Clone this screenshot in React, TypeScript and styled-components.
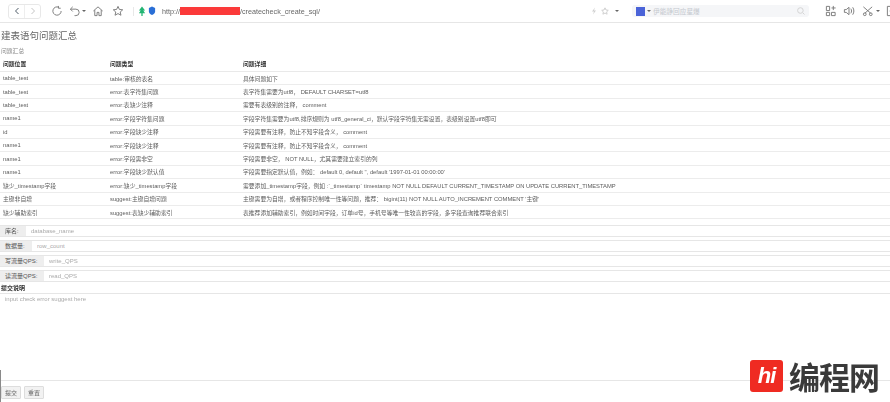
import styled, { createGlobalStyle } from "styled-components";

const Global = createGlobalStyle`
    html, body {
        margin: 0;
        padding: 0;
        background: #fff;
        overflow: hidden;
    }
`;

const FONT = `"Liberation Sans", "Noto Sans CJK SC", sans-serif`;

const Page = styled.div`
    position: relative;
    width: 890px;
    height: 402px;
    overflow: hidden;
    font-family: ${FONT};
    color: #555;
    filter: blur(0.35px);
`;

const Toolbar = styled.header`
    height: 23px;
    box-sizing: border-box;
    border-bottom: 1px solid #e6e6e6;
    display: flex;
    align-items: center;
    padding-left: 8px;
    color: #777;
`;

const NavGroup = styled.div`
    width: 33px;
    height: 15px;
    box-sizing: border-box;
    border: 1px solid #e8e8e8;
    border-radius: 3px;
    display: flex;
    flex: none;
    margin-right: 10px;
`;

const NavButton = styled.div<{ $off?: boolean }>`
    flex: 1;
    display: flex;
    align-items: center;
    justify-content: center;
    color: ${(p) => (p.$off ? "#c4c4c4" : "#4d5a66")};
    & + & {
        border-left: 1px solid #eee;
    }
`;

const ToolIcon = styled.svg<{ $gap?: number }>`
    width: 12px;
    height: 12px;
    fill: none;
    stroke: currentColor;
    stroke-width: 1;
    flex: none;
    margin-right: ${(p) => p.$gap ?? 6}px;
`;

const BadgeIcon = styled.svg<{ $color: string; $gap: number }>`
    width: 8px;
    height: 12px;
    flex: none;
    fill: ${(p) => p.$color};
    margin-right: ${(p) => p.$gap}px;
`;

const Caret = styled.span<{ $left?: number; $right?: number }>`
    width: 0;
    height: 0;
    border-left: 2px solid transparent;
    border-right: 2px solid transparent;
    border-top: 2px solid #666;
    flex: none;
    margin: 0 ${(p) => p.$right ?? 0}px 0 ${(p) => p.$left ?? 0}px;
`;

const Divider = styled.span`
    width: 1px;
    height: 9px;
    background: #e8e8e8;
    margin-right: 4px;
    flex: none;
`;

const Url = styled.div`
    font-size: 7.2px;
    color: #666;
    margin-left: 6px;
    width: 428px;
    flex: none;
    white-space: nowrap;
    display: flex;
    align-items: center;
`;

const Redaction = styled.span`
    display: inline-block;
    width: 60px;
    height: 8px;
    background: #fb3a3a;
`;

const PageActions = styled.div`
    width: 42px;
    flex: none;
    display: flex;
    align-items: center;
    gap: 3px;
    color: #cfcfcf;
`;

const SmallIcon = styled.svg`
    width: 8px;
    height: 8px;
    fill: none;
    stroke: currentColor;
    stroke-width: 1;
    flex: none;
`;

const SearchBox = styled.div`
    width: 177px;
    height: 12px;
    background: #f5f6f8;
    border-radius: 3px;
    display: flex;
    align-items: center;
    padding-left: 4px;
    box-sizing: border-box;
    flex: none;
    color: #c4c8ce;
    font-size: 6.7px;
    margin-right: 16px;
`;

const SearchLogo = styled.span`
    width: 9px;
    height: 9px;
    background: #4a63d8;
    flex: none;
    margin-right: 2px;
`;

const SearchText = styled.span`
    flex: 1;
    margin-left: 2px;
`;

const SearchGlass = styled(SmallIcon)`
    margin-right: 4px;
    color: #d4d4d4;
`;

const Main = styled.main`
    padding-top: 6px;
`;

const Title = styled.h3`
    margin: 0;
    font-size: 9.5px;
    line-height: 13px;
    font-weight: 400;
    color: #666;
    padding-left: 1px;
`;

const SubTitle = styled.div`
    font-size: 5.8px;
    line-height: 8px;
    color: #888;
    margin-top: 5px;
    padding-left: 1px;
`;

const Table = styled.table`
    width: 890px;
    border-collapse: collapse;
    table-layout: fixed;
    margin-top: 2px;
    font-size: 5.8px;
`;

const HeadCell = styled.th<{ $w: number }>`
    width: ${(p) => p.$w}px;
    height: 13px;
    padding: 0 0 1px 3px;
    text-align: left;
    font-weight: 700;
    color: #333;
    border-bottom: 1px solid #e9e9e9;
`;

const Cell = styled.td`
    height: 12.4px;
    padding: 0 0 0 3px;
    color: #5c5c5c;
    border-bottom: 1px solid #ececec;
    white-space: nowrap;
`;

const Form = styled.form`
    margin-top: 6px;
`;

const InputGroup = styled.div`
    height: 12px;
    display: flex;
    margin-bottom: 3px;
    border-top: 1px solid #e6e6e6;
    border-bottom: 1px solid #e6e6e6;
    box-sizing: border-box;
`;

const Addon = styled.span<{ $w: number }>`
    width: ${(p) => p.$w}px;
    flex: none;
    box-sizing: border-box;
    padding-left: 5px;
    background: #eee;
    color: #555;
    font-size: 6px;
    line-height: 10px;
`;

const Field = styled.input`
    flex: 1;
    border: 0;
    outline: 0;
    padding: 0 0 0 5px;
    min-width: 0;
    font: 6px ${FONT};
    background: #fff;
    &::placeholder {
        color: #aaa;
    }
`;

const NoteLabel = styled.label`
    display: block;
    font-size: 6px;
    line-height: 7px;
    font-weight: 700;
    color: #333;
    margin-left: 1px;
`;

const Note = styled.textarea`
    display: block;
    width: 890px;
    height: 88px;
    box-sizing: border-box;
    border: 0;
    border-top: 1px solid #e6e6e6;
    border-bottom: 1px solid #e6e6e6;
    outline: 0;
    resize: none;
    padding: 2px 5px;
    margin-top: 1px;
    font: 6px ${FONT};
    &::placeholder {
        color: #aaa;
    }
`;

const Buttons = styled.div`
    display: flex;
    gap: 3px;
    padding: 5px 0 0 1px;
`;

const Button = styled.button`
    width: 20px;
    height: 13px;
    padding: 0;
    border: 1px solid #ddd;
    border-radius: 1px;
    background: #f2f2f2;
    color: #666;
    font: 6px ${FONT};
`;

const EdgeLine = styled.div`
    position: absolute;
    left: 0;
    top: 370px;
    bottom: 0;
    width: 1px;
    background: #8a8a8a;
`;

const Watermark = styled.div`
    position: absolute;
    left: 750px;
    top: 359px;
    display: flex;
    align-items: center;
`;

const LogoMark = styled.div`
    width: 33px;
    height: 32px;
    border-radius: 3px;
    background: #ef2b22;
    color: #fff;
    display: flex;
    align-items: center;
    justify-content: center;
    font: italic 700 22px "Liberation Sans", sans-serif;
    letter-spacing: -1px;
    margin-right: 6px;
`;

const LogoText = styled.span`
    font: 700 31px "Noto Sans CJK SC", sans-serif;
    line-height: 34px;
    letter-spacing: -1px;
    color: #3a3a3a;
`;

const rows = [
    ["table_test", "table:审核的表名", "具体问题如下"],
    ["table_test", "error:表字符集问题", "表字符集需要为utf8，  DEFAULT CHARSET=utf8"],
    ["table_test", "error:表缺少注释", "需要有表级别的注释， comment"],
    ["name1", "error:字段字符集问题", "字段字符集需要为utf8,排序规则为 utf8_general_ci，默认字段字符集无需设置，表级别设置utf8即可"],
    ["id", "error:字段缺少注释", "字段需要有注释，防止不知字段含义， comment"],
    ["name1", "error:字段缺少注释", "字段需要有注释，防止不知字段含义， comment"],
    ["name1", "error:字段需非空", "字段需要非空， NOT NULL，尤其需要建立索引的列"],
    ["name1", "error:字段缺少默认值", "字段需要指定默认值，例如： default 0, default '', default '1997-01-01 00:00:00'"],
    ["缺少_timestamp字段", "error:缺少_timestamp字段", "需要添加_timestamp字段，例如 :`_timestamp` timestamp NOT NULL DEFAULT CURRENT_TIMESTAMP ON UPDATE CURRENT_TIMESTAMP"],
    ["主键非自增", "suggest:主键自增问题", "主键需要为自增，或者程序控制唯一性等问题，推荐： bigint(11) NOT NULL AUTO_INCREMENT COMMENT '主键'"],
    ["缺少辅助索引", "suggest:表缺少辅助索引", "表推荐添加辅助索引，例如时间字段，订单id号，手机号等唯一性较高的字段，多字段查询推荐联合索引"],
];

const fields = [
    { label: "库名:", width: 26, hint: "database_name" },
    { label: "数据量:", width: 32, hint: "row_count" },
    { label: "写流量QPS:", width: 44, hint: "write_QPS" },
    { label: "读流量QPS:", width: 44, hint: "read_QPS" },
];

const App = () => (
    <Page>
        <Global />
        <Toolbar>
            <NavGroup>
                <NavButton>
                    <SmallIcon viewBox="0 0 8 8" strokeWidth="1.4"><path d="M5.5 1 2.5 4l3 3" /></SmallIcon>
                </NavButton>
                <NavButton $off>
                    <SmallIcon viewBox="0 0 8 8"><path d="M2.5 1l3 3-3 3" /></SmallIcon>
                </NavButton>
            </NavGroup>
            <ToolIcon viewBox="0 0 13 13"><path d="M8.5 2.5A4.5 4.500 0 1 0 11 6.500M8 1v2.500h2.500" /></ToolIcon>
            <ToolIcon viewBox="0 0 13 13" $gap={1}><path d="M4 2 1.500 4.500 4 7M1.500 4.500h6a3.500 3.500 0 0 1 0 7H6" /></ToolIcon>
            <Caret $right={6} />
            <ToolIcon viewBox="0 0 13 13" $gap={8}><path d="M1.500 6.500 6.500 2l5 4.500M3 5.500v6h2.500V8h2v3.500H10v-6" /></ToolIcon>
            <ToolIcon viewBox="0 0 13 13" $gap={9}><path d="m6.500 1.500 1.500 3.300 3.600.4-2.700 2.400.8 3.500-3.200-1.800-3.200 1.800.8-3.500L1.400 5.200 5 4.800z" /></ToolIcon>
            <Divider />
            <BadgeIcon viewBox="0 0 9 13" $color="#22b573" $gap={2}>
                <path d="M4.500 1.500 1 6h2L1 9h2.800v3h1.400V9H8L6 6h2z" />
            </BadgeIcon>
            <BadgeIcon viewBox="0 0 9 13" $color="#2a6fd6" $gap={0}>
                <path d="M1 3l3.500-1.500L8 3v4c0 2-2 3.500-3.500 4C3 10.500 1 9 1 7z" />
            </BadgeIcon>
            <Url>
                http://<Redaction />/createcheck_create_sql/
            </Url>
            <PageActions>
                <SmallIcon viewBox="0 0 8 8"><path d="M5 .5 2 4.500h2L3 7.500l3-4H4z" fill="currentColor" stroke="none" /></SmallIcon>
                <SmallIcon viewBox="0 0 8 8"><path d="m4 .8 1 2.200 2.300.3-1.700 1.600.5 2.300L4 6l-2.100 1.200.5-2.300L.7 3.300 3 3z" /></SmallIcon>
                <Caret $left={3} />
            </PageActions>
            <SearchBox>
                <SearchLogo />
                <Caret />
                <SearchText>伊能静回应星爆</SearchText>
                <SearchGlass viewBox="0 0 8 8"><path d="M6 6l1.500 1.500M6.200 3.500a2.800 2.800 0 1 1-5.600 0 2.800 2.800 0 0 1 5.600 0z" /></SearchGlass>
            </SearchBox>
            <ToolIcon viewBox="0 0 13 13"><path d="M1.500 1.500h3.500v4.500H1.500zM1.500 8h3.500v3.500H1.500zM7 8h4v3.500H7zM9 1v4.500M7 3.200h4.500" /></ToolIcon>
            <ToolIcon viewBox="0 0 13 13" $gap={7}><path d="M1.500 5v3h2l3 2.500v-8L3.500 5zM8.500 4c1 1.500 1 3.500 0 5M10.500 2.500c1.700 2.500 1.700 5.500 0 8" /></ToolIcon>
            <ToolIcon viewBox="0 0 13 13" $gap={0}><path d="M1.500 2l8 7M11 2 3 9M4.500 10a1.500 1.500 0 1 1-3 0 1.500 1.500 0 0 1 3 0zM11 10a1.500 1.500 0 1 1-3 0 1.500 1.500 0 0 1 3 0z" /></ToolIcon>
            <Caret $left={2} $right={6} />
            <ToolIcon viewBox="0 0 13 13" $gap={0}><path d="M1.500 1.500h10v10h-10zM4 6.500h5" /></ToolIcon>
        </Toolbar>
        <Main>
            <Title>建表语句问题汇总</Title>
            <SubTitle>问题汇总</SubTitle>
            <Table>
                <thead>
                    <tr>
                        <HeadCell $w={104}>问题位置</HeadCell>
                        <HeadCell $w={130}>问题类型</HeadCell>
                        <HeadCell $w={647}>问题详细</HeadCell>
                    </tr>
                </thead>
                <tbody>
                    {rows.map((row, i) => (
                        <tr key={i}>
                            {row.map((text, j) => (
                                <Cell key={j}>{text}</Cell>
                            ))}
                        </tr>
                    ))}
                </tbody>
            </Table>
            <Form>
                {fields.map((f) => (
                    <InputGroup key={f.hint}>
                        <Addon $w={f.width}>{f.label}</Addon>
                        <Field placeholder={f.hint} />
                    </InputGroup>
                ))}
                <NoteLabel>提交说明</NoteLabel>
                <Note placeholder="input check error suggest here" />
                <Buttons>
                    <Button type="button">提交</Button>
                    <Button type="button">重置</Button>
                </Buttons>
            </Form>
        </Main>
        <EdgeLine />
        <Watermark>
            <LogoMark>hi</LogoMark>
            <LogoText>编程网</LogoText>
        </Watermark>
    </Page>
);

export default App;
